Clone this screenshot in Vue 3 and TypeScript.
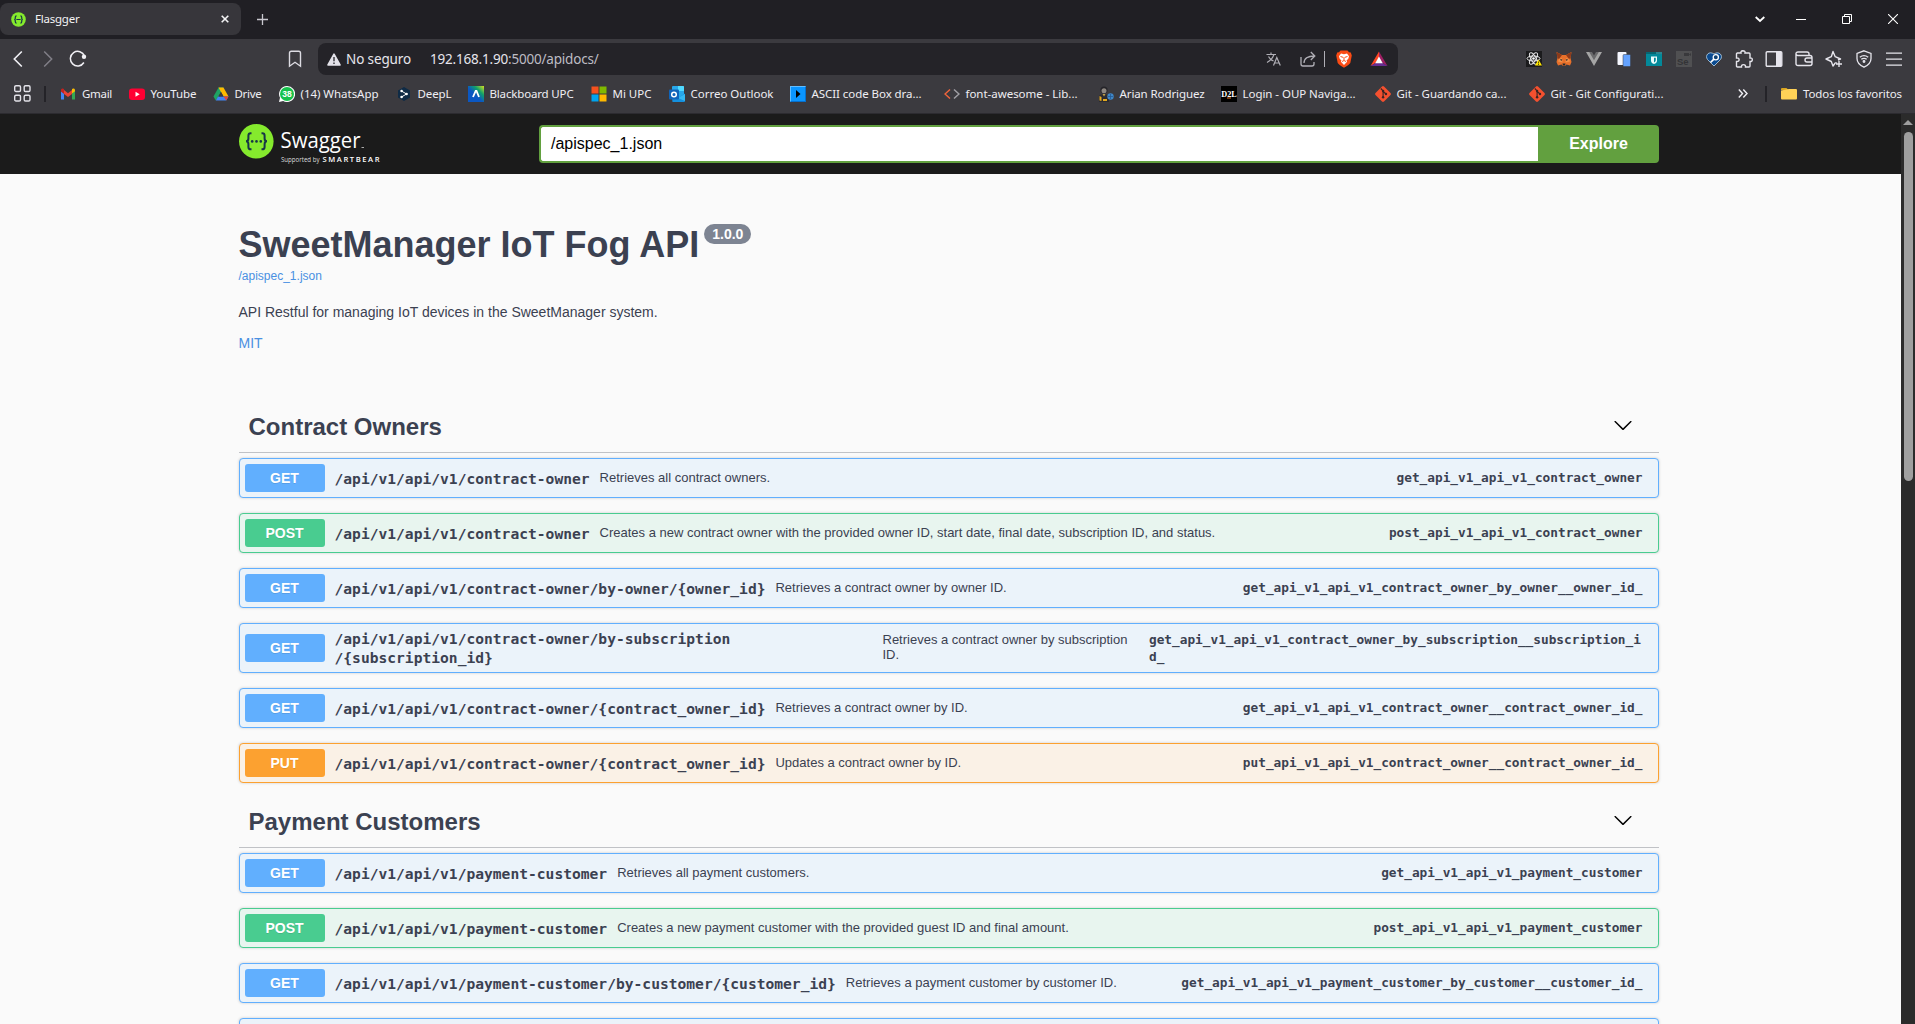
<script setup lang="ts">
type Method = 'get' | 'post' | 'put'

interface Operation {
  method: Method
  path: string[]
  summary: string
  id: string
  wrap?: boolean
}

interface Bookmark {
  icon: string
  label: string
  width: number
  text: number
}

interface Tag {
  name: string
  operations: Operation[]
}

const icons: Record<string, string> = {
  gmail:
    '<path d="M1 4v9.5h3V7.300z" fill="#4285f4"/><path d="M12 7.300v6.200h3V4z" fill="#34a853"/><path d="M1 3.500V5.500l3 2.300V4z" fill="#c5221f"/><path d="M4 4l4 3.300L12 4v4l-4 3-4-3z" fill="#ea4335"/><path d="M1 4.200C1 2.500 2.800 2 4 3v4.500L1 5.300z" fill="#c5221f"/><path d="M15 4.200C15 2.500 13.200 2 12 3v4.500l3-2.200z" fill="#fbbc04"/>',
  youtube: '<rect x="0" y="2.500" width="16" height="11.500" rx="3" fill="#ff0033"/><path d="M6.500 5.800v5l4.200-2.500z" fill="#fff"/>',
  drive:
    '<path d="M5.500 1.500h5L5.300 10.500 2.800 14.500 .5 10.500z" fill="#1ea362"/><path d="M5.500 1.500h5l5 9h-5z" fill="#ffba00"/><path d="M5 10.500h10.500l-2.300 4H2.800z" fill="#4285f4"/><path d="M8 6l2.500 4.500h-5z" fill="#3b3a3f"/><path d="M10.500 10.500h5l-2.300 4z" fill="#ea4335"/>',
  whatsapp:
    '<path d="M8 0a8 8 0 1 1-3.800 15L0 16l1-4.200A8 8 0 0 1 8 0z" fill="#fff"/><circle cx="8" cy="8" r="7" fill="#16c24c"/><text x="8" y="11" text-anchor="middle" font-family="Liberation Sans, sans-serif" font-weight="bold" font-size="8.500" fill="#fff">38</text>',
  deepl:
    '<path d="M8 1l6 3.500v7L8 15l-6-3.500v-7z" fill="#0f2b46"/><path d="M5.500 5l5 3-5 3" fill="none" stroke="#fff" stroke-width="1"/><circle cx="5.600" cy="5" r="1.300" fill="#fff"/><circle cx="10.600" cy="8" r="1.300" fill="#fff"/><circle cx="5.600" cy="11" r="1.300" fill="#fff"/>',
  blackboard:
    '<defs><linearGradient id="bb" x1="0" y1="1" x2="1" y2="0"><stop offset=".45" stop-color="#0b57c2"/><stop offset=".7" stop-color="#10a06a"/><stop offset="1" stop-color="#d8e021"/></linearGradient></defs><rect width="16" height="16" fill="url(#bb)"/><path d="M5 11l2.700-6h.8L11 11" fill="none" stroke="#fff" stroke-width="1.800"/>',
  microsoft:
    '<path d="M.5.5h7v7h-7z" fill="#f4511e"/><path d="M8.500.5h7v7h-7z" fill="#80b900"/><path d="M.5 8.500h7v7h-7z" fill="#00a4ef"/><path d="M8.500 8.500h7v7h-7z" fill="#ffb900"/>',
  outlook:
    '<rect x="3" y="0" width="12" height="11" rx="1" fill="#28a8ea"/><path d="M9 0h5q1 0 1 1v4H9z" fill="#50d9ff"/><path d="M2.500 8.500L9 12l7-4.500V15q0 1-1 1H3.500z" fill="#1490df"/><path d="M16 8v7l-7-3z" fill="#35b8f1"/><rect x="0" y="3.500" width="10" height="10" rx="1" fill="#0f64ba"/><circle cx="5" cy="8.500" r="2.300" fill="none" stroke="#fff" stroke-width="1.500"/>',
  ascii: '<rect width="16" height="16" fill="#0a95ff"/><path d="M0 0h16v1H1v15H0z" fill="#62bdff"/><path d="M16 0v16H0l1-1h14V1z" fill="#0570cf"/><path d="M6 4l4.500 4L6 12z" fill="#000"/>',
  code: '<path d="M6 3.500L1 8l5 4.500" fill="none" stroke="#f0643b" stroke-width="1.500"/><path d="M10 3.500L15 8l-5 4.500" fill="none" stroke="#a09fa5" stroke-width="1.500"/>',
  person:
    '<circle cx="6" cy="4" r="3.600" fill="#252429"/><circle cx="6" cy="4.700" r="2.500" fill="#8d8781"/><path d="M1 16V11q0-3 5-3 4 0 5 3v5z" fill="#2b2b30"/><path d="M1.500 10l2 1v4l-2-.500zM5 13h4v2H5z" fill="#e3a81f"/><path d="M4.500 8h3L6 10.500z" fill="#c3a14a"/><circle cx="12.500" cy="10.500" r="3.200" fill="#3e86c8"/><path d="M10 10.500h5M12.500 8v5" stroke="#245a93" stroke-width=".8"/>',
  d2l: '<rect width="16" height="16" fill="#000"/><text x="8" y="11" text-anchor="middle" font-family="Liberation Serif, serif" font-weight="bold" font-size="8.500" textLength="15.500" lengthAdjust="spacingAndGlyphs" fill="#fff">D2L</text><path d="M6 12h4" stroke="#e5701e"/>',
  git: '<path d="M7 .500Q8-.3 9 .500L15.500 7Q16.300 8 15.500 9L9 15.500Q8 16.300 7 15.500L.5 9Q-.3 8 .5 7z" fill="#f4502f"/><path d="M5.800 2.500l2.300 2.400V11.500M8.200 5.500L11 8" stroke="#3a2523" stroke-width="1.100" fill="none"/><circle cx="8.100" cy="5" r="1.200" fill="#3a2523"/><circle cx="8.100" cy="11.300" r="1.200" fill="#3a2523"/><circle cx="11" cy="8" r="1.200" fill="#3a2523"/>',
  folder: '<path d="M0 3q0-1 1-1h4.500l2 2H0z" fill="#d9a520"/><path d="M0 4.500L8 3h7q1 0 1 1v8.500q0 1-1 1H1q-1 0-1-1z" fill="#ffd257"/>',
  react:
    '<rect width="16" height="16" fill="#1b1b1d"/><g fill="none" stroke="#e9e9ea" stroke-width="1"><ellipse cx="7.500" cy="7.500" rx="6.500" ry="2.500"/><ellipse cx="7.500" cy="7.500" rx="6.500" ry="2.500" transform="rotate(60 7.500 7.500)"/><ellipse cx="7.500" cy="7.500" rx="6.500" ry="2.500" transform="rotate(120 7.500 7.500)"/></g><circle cx="7.500" cy="7.500" r="1.300" fill="#fff"/><path d="M12.500 8.500L16 14.500H9z" fill="#ffe600"/><path d="M12.500 10.500v2M12.500 13v1" stroke="#4a4300" stroke-width=".9"/>',
  fox: '<path d="M.5 1l5.500 3h4l5.500-3-1 6 1 4-1.500 3.500-3.500-1L9 15H7l-1.500-1.500-3.500 1L.5 11l1-4z" fill="#e8702a"/><path d="M.5 1L6 4 3 8 1.500 7zM15.500 1L10 4l3 4 1.500-1z" fill="#8b3a1b"/><path d="M3 8l3-1 .5 4.500L2 10.500zM13 8l-3-1-.5 4.500 4.500-1z" fill="#f2914a"/><path d="M4.500 8.500l1.500.8M11.500 8.500l-1.500.8" stroke="#23282c" stroke-width="1.200"/><path d="M6.500 12.500h3L9 14.500H7z" fill="#23282c"/>',
  vue: '<path d="M0 1h5l3 5 3-5h5L8 15z" fill="#a5a5a5"/><path d="M3.200 1H6l2 3.500L10 1h2.800L8 9.300z" fill="#6a6a6c"/>',
  pages: '<rect x="1.500" y="1" width="9" height="13" rx="1" fill="#f5f7ff"/><rect x="7" y="3.500" width="7.500" height="12" rx="1" fill="#64a2ff" stroke="#3b3a3f" stroke-width=".5"/>',
  teal: '<rect y="1" width="16" height="14" fill="#03899a"/><path d="M0 1h16v2H0z" fill="#056672"/><path d="M10.500 2h1M12.500 2h1M14.500 2h1" stroke="#9fe6ee"/><path d="M5 5.500h6v4q0 2.500-3 3.500-3-1-3-3.500z" fill="#eafcfd"/><path d="M8 6.800V11.500Q9.800 10.800 9.800 9V6.800z" fill="#03899a"/>',
  se: '<rect width="16" height="16" fill="#505052"/><text x="1" y="14" font-family="Liberation Sans, sans-serif" font-weight="bold" font-size="9.500" fill="#343437">Se</text><path d="M8 2h5v3H8zM13 3.500l2-1.500v3z" fill="#39393c"/>',
  heart: '<path d="M8 15L1.500 8.500C-1.500 4.500 3-.500 8 3c5-3.500 9.500 1.500 6.500 5.500z" fill="#0a4a90" stroke="#b8d4ea" stroke-width=".8"/><circle cx="9.800" cy="6.300" r="2.600" fill="#0f4172" stroke="#fff" stroke-width="1.300"/><path d="M7.900 8.200L4.500 11.500" stroke="#fff" stroke-width="1.700"/>',
}

const bookmarks: Bookmark[] = [
  { icon: 'gmail', label: 'Gmail', width: 68.5, text: 30 },
  { icon: 'youtube', label: 'YouTube', width: 84, text: 46 },
  { icon: 'drive', label: 'Drive', width: 66, text: 27 },
  { icon: 'whatsapp', label: '(14) WhatsApp', width: 117, text: 78 },
  { icon: 'deepl', label: 'DeepL', width: 72, text: 34 },
  { icon: 'blackboard', label: 'Blackboard UPC', width: 123, text: 84 },
  { icon: 'microsoft', label: 'Mi UPC', width: 78, text: 39 },
  { icon: 'outlook', label: 'Correo Outlook', width: 121, text: 83 },
  { icon: 'ascii', label: 'ASCII code Box dra...', width: 154, text: 110 },
  { icon: 'code', label: 'font-awesome - Lib...', width: 154, text: 112 },
  { icon: 'person', label: 'Arian Rodriguez', width: 123, text: 85 },
  { icon: 'd2l', label: 'Login - OUP Naviga...', width: 154, text: 113 },
  { icon: 'git', label: 'Git - Guardando ca...', width: 154, text: 110 },
  { icon: 'git', label: 'Git - Git Configurati...', width: 154, text: 113 },
]

const extensions = ['react', 'fox', 'vue', 'pages', 'teal', 'se', 'heart']

const base = '/api/v1/api/v1'
const tags: Tag[] = [
  {
    name: 'Contract Owners',
    operations: [
      { method: 'get', path: [base + '/contract-owner'], summary: 'Retrieves all contract owners.', id: 'get_api_v1_api_v1_contract_owner' },
      { method: 'post', path: [base + '/contract-owner'], summary: 'Creates a new contract owner with the provided owner ID, start date, final date, subscription ID, and status.', id: 'post_api_v1_api_v1_contract_owner' },
      { method: 'get', path: [base + '/contract-owner/by-owner/{owner_id}'], summary: 'Retrieves a contract owner by owner ID.', id: 'get_api_v1_api_v1_contract_owner_by_owner__owner_id_' },
      { method: 'get', path: [base + '/contract-owner/by-subscription', '/{subscription_id}'], summary: 'Retrieves a contract owner by subscription ID.', id: 'get_api_v1_api_v1_contract_owner_by_subscription__subscription_id_', wrap: true },
      { method: 'get', path: [base + '/contract-owner/{contract_owner_id}'], summary: 'Retrieves a contract owner by ID.', id: 'get_api_v1_api_v1_contract_owner__contract_owner_id_' },
      { method: 'put', path: [base + '/contract-owner/{contract_owner_id}'], summary: 'Updates a contract owner by ID.', id: 'put_api_v1_api_v1_contract_owner__contract_owner_id_' },
    ],
  },
  {
    name: 'Payment Customers',
    operations: [
      { method: 'get', path: [base + '/payment-customer'], summary: 'Retrieves all payment customers.', id: 'get_api_v1_api_v1_payment_customer' },
      { method: 'post', path: [base + '/payment-customer'], summary: 'Creates a new payment customer with the provided guest ID and final amount.', id: 'post_api_v1_api_v1_payment_customer' },
      { method: 'get', path: [base + '/payment-customer/by-customer/{customer_id}'], summary: 'Retrieves a payment customer by customer ID.', id: 'get_api_v1_api_v1_payment_customer_by_customer__customer_id_' },
    ],
  },
]

// Tracks a label out or in until it is as wide as the given number of pixels.
const vFit = {
  mounted(el: HTMLElement, binding: { value: number }) {
    const length = (el.textContent ?? '').length
    const natural = el.getBoundingClientRect().width
    el.style.letterSpacing = `${(binding.value - natural) / length}px`
  },
}
</script>

<template>
  <div class="window">
    <header class="tabstrip">
      <div class="tab">
        <svg class="favicon" width="15" height="15" viewBox="0 0 35 35">
          <circle cx="17.500" cy="17.500" r="17" fill="#85ea2d" />
          <path d="M13 9q-3 0-3 3v3q0 2.500-2.500 2.500Q10 17.500 10 20v3q0 3 3 3M22 9q3 0 3 3v3q0 2.500 2.500 2.500Q25 17.500 25 20v3q0 3-3 3M12.500 17.500h10" fill="none" stroke="#173647" stroke-width="2.800" />
        </svg>
        <span v-fit="44.5" class="tab-title">Flasgger</span>
        <svg class="tab-close" width="8" height="8" viewBox="0 0 8 8"><path d="M.7.7l6.600 6.600M7.300.7L.7 7.300" stroke="#f4f4f6" stroke-width="1.600" /></svg>
      </div>
      <svg class="new-tab" width="11" height="11" viewBox="0 0 11 11"><path d="M5.500 0v11M0 5.500h11" stroke="#c9c8cf" stroke-width="1.300" /></svg>
      <div class="controls">
        <svg width="10" height="10" viewBox="0 0 10 10"><path d="M.7 3l4.300 4 4.300-4" fill="none" stroke="#fff" stroke-width="1.800" /></svg>
        <svg width="10" height="10" viewBox="0 0 10 10"><path d="M0 5.500h10" stroke="#fff" /></svg>
        <svg width="10" height="10" viewBox="0 0 10 10"><path d="M.5 2.500h7v7h-7zM2.500 2.500v-2h7v7h-2" fill="none" stroke="#fff" /></svg>
        <svg width="10" height="10" viewBox="0 0 10 10"><path d="M0 0l10 10M10 0L0 10" stroke="#fff" stroke-width="1.100" /></svg>
      </div>
    </header>

    <div class="toolbar">
      <div class="nav">
        <svg width="10" height="18" viewBox="0 0 10 18"><path d="M8.800 1.500L1.300 9l7.500 7.500" fill="none" stroke="#f1f0f5" stroke-width="1.600" /></svg>
        <svg width="10" height="18" viewBox="0 0 10 18"><path d="M1.200 1.500L8.700 9l-7.500 7.500" fill="none" stroke="#817f87" stroke-width="1.500" /></svg>
        <svg width="18" height="18" viewBox="0 0 18 18"><path d="M14.900 12.500A7.300 7.300 0 1 1 15.500 6" fill="none" stroke="#f1f0f5" stroke-width="1.500" /><circle cx="15" cy="6.800" r="2.200" fill="#f1f0f5" /></svg>
      </div>
      <svg class="mark" width="14" height="18" viewBox="0 0 14 18"><path d="M1.500 3Q1.500 1.200 3.300 1.200h7.400q1.800 0 1.800 1.800v13.200L7 12.300l-5.500 3.900z" fill="none" stroke="#dddce3" stroke-width="1.400" /></svg>
      <div class="address">
        <svg class="warn" width="14" height="13" viewBox="0 0 14 13"><path d="M7 1.200L13 12H1z" fill="#e3e2e9" stroke="#e3e2e9" stroke-width="1.600" stroke-linejoin="round" /><path d="M7 4v4.300M7 9.500v1.500" stroke="#242328" stroke-width="1.300" /></svg>
        <span v-fit="65" class="insecure">No seguro</span>
        <span v-fit="168.5" class="url">192.168.1.90<i>:5000/apidocs/</i></span>
        <div class="address-tools">
          <svg width="16" height="16" viewBox="0 0 16 16" fill="none" stroke="#b0afb6" stroke-width="1.200"><path d="M.5 3.500h9.500M5 1.500v2M8 3.500Q6.500 8.500 1 11.500M2.500 5.500Q4 8.500 7.500 10" /><path d="M7.500 14.500l3.300-8 3.500 8M8.700 12h4.500" /></svg>
          <svg width="16" height="16" viewBox="0 0 16 16" fill="none" stroke="#b0afb6" stroke-width="1.300"><path d="M1 6v7q0 2 2 2h9q2 0 2-2v-2" /><path d="M4 12Q4 5 14.500 5M10.800 1l4 4-4 4" /></svg>
          <i class="divider" />
          <svg width="16" height="18" viewBox="0 0 16 18"><path d="M4.500.5h7l1.500 1.700 1.800.2 1 3-1.500 7.600Q13.500 14.500 8 17.700 2.500 14.500 1.700 13L.2 5.400l1-3 1.800-.2z" fill="#fb4b14" /><path d="M5 3.500l3 .7 3-.7 2 2.800-.7 2.500-1.800 1.700.6 1.300L8 15l-3.100-3.200.6-1.300L3.700 8.800 3 6.300z" fill="#fff" /><path d="M4.500 6.500l2.500.8M11.500 6.500L9 7.300M8 7v3M6 11.500l2-1 2 1" stroke="#fb4b14" stroke-width="1" fill="none" /></svg>
          <svg width="18" height="16" viewBox="0 0 18 16"><path d="M9 .5v6L5.500 12 .5 15z" fill="#ff4724" /><path d="M9 .5L17.500 15l-5-3L9 6.500z" fill="#9e1f63" /><path d="M.5 15h17l-5-3h-7z" fill="#662d91" /><path d="M9 5.500l3.800 6.700H5.200z" fill="#fff" /></svg>
        </div>
      </div>
      <div class="extensions">
        <svg v-for="name in extensions" :key="name" width="16" height="16" viewBox="0 0 16 16" v-html="icons[name]" />
        <svg width="18" height="18" viewBox="0 0 18 18" fill="none" stroke="#e6e5ec" stroke-width="1.400"><path d="M2 3h4q-.5-2 1.700-2.200Q10.500.8 10 3h4q1 0 1 1v4q2.300-.3 2.300 1.700T15 11.500V16q0 1-1 1h-3.500q.3-2.400-2-2.400T6.500 17H2.500q-1 0-1-1v-4.500q2.600.2 2.600-1.800T1.500 8V4Q1.500 3 2.500 3z" /></svg>
        <svg width="18" height="18" viewBox="0 0 18 18"><rect x="1.200" y="1.700" width="15.600" height="14.600" rx="1" fill="none" stroke="#e6e5ec" stroke-width="1.400" /><path d="M11 2h5.500v14H11z" fill="#e6e5ec" /></svg>
        <svg width="18" height="18" viewBox="0 0 18 18" fill="none" stroke="#e6e5ec" stroke-width="1.400"><path d="M14 5V4q0-2-2-2H3Q1 2 1 3.700T3 5.500h12q2 0 2 2v6q0 2-2 2H3q-2 0-2-2V3.500M17 8h-5q-2 0-2 2t2 2h5" /></svg>
        <svg width="18" height="18" viewBox="0 0 18 18" fill="none" stroke="#e6e5ec" stroke-width="1.400"><path d="M12 13.200q-1.800-1-2.500.8L8 16 6.300 11.500 1 9l5.300-2.300L8 1.500l2.200 5.200L15.500 9l-2.500 1M14 11v6M11 14h6" stroke-linejoin="round" /></svg>
        <svg width="18" height="18" viewBox="0 0 18 18" fill="none" stroke="#e6e5ec" stroke-width="1.300"><path d="M9 .8l7 2.700v5q0 5.500-7 8.700-7-3.200-7-8.700v-5z" /><path d="M4.800 7.200Q9 4 13.200 7.200M6.300 9.300q2.700-2 5.400 0" /><circle cx="9" cy="11.500" r=".8" fill="#e6e5ec" /></svg>
        <svg width="18" height="18" viewBox="0 0 18 18"><path d="M1 3.200h16M1 9.200h16M1 15.200h16" stroke="#e6e5ec" stroke-width="1.300" /></svg>
      </div>
    </div>

    <div class="bookmarks">
      <svg class="apps" width="17" height="17" viewBox="0 0 17 17" fill="none" stroke="#e3e2e9" stroke-width="1.400"><rect x=".7" y=".7" width="5.800" height="5.800" rx="1.300" /><rect x="10.200" y=".7" width="5.800" height="5.800" rx="1.300" /><rect x=".7" y="10.200" width="5.800" height="5.800" rx="1.300" /><rect x="10.200" y="10.200" width="5.800" height="5.800" rx="1.300" /></svg>
      <i class="bar" />
      <div v-for="b in bookmarks" :key="b.label" class="bookmark" :style="{ width: b.width + 'px' }">
        <svg width="16" height="16" viewBox="0 0 16 16" v-html="icons[b.icon]" />
        <span v-fit="b.text">{{ b.label }}</span>
      </div>
      <div class="bookmarks-end">
        <svg width="10" height="9" viewBox="0 0 10 9"><path d="M.8.6l3.700 3.900L.8 8.400M5.300.6L9 4.500 5.300 8.400" fill="none" stroke="#f1f0f5" stroke-width="1.400" /></svg>
        <i class="bar" />
        <div class="bookmark">
          <svg width="16" height="16" viewBox="0 0 16 16" v-html="icons.folder" />
          <span v-fit="99">Todos los favoritos</span>
        </div>
      </div>
    </div>

    <div class="viewport">
      <main class="page">
        <div class="topbar">
          <svg class="logo" width="145" height="42" viewBox="0 0 145 42">
            <circle cx="17.300" cy="17.300" r="17.300" fill="#85ea2d" />
            <path d="M12.500 9.300h-.8q-2.300 0-2.300 2.400v2.800q0 2.800-2.400 2.800 2.400 0 2.400 2.800v2.800q0 2.400 2.300 2.400h.8M22.500 9.300h.8q2.300 0 2.300 2.400v2.800q0 2.800 2.400 2.800-2.400 0-2.400 2.800v2.800q0 2.400-2.300 2.400h-.8" fill="none" stroke="#173647" stroke-width="2" />
            <g fill="#173647"><circle cx="13.200" cy="17.400" r="1.300" /><circle cx="17.500" cy="17.400" r="1.300" /><circle cx="21.800" cy="17.400" r="1.300" /></g>
            <text x="41.500" y="24" font-family="Open Sans, sans-serif" font-size="22.500" textLength="80" lengthAdjust="spacingAndGlyphs" fill="#fff">Swagger</text>
            <path d="M122.500 23.500h2.500" stroke="#aaa" />
            <text x="42" y="38" font-family="Open Sans, sans-serif" font-size="6.500" textLength="38.500" lengthAdjust="spacingAndGlyphs" fill="#ddd">Supported by</text>
            <text x="83.500" y="38" font-family="Open Sans, sans-serif" font-weight="600" font-size="7.600" textLength="57" fill="#fff">SMARTBEAR</text>
          </svg>
          <div class="spec">
            <div class="spec-input">/apispec_1.json</div>
            <div class="spec-button">Explore</div>
          </div>
        </div>

        <section class="info">
          <h2>SweetManager IoT Fog API<span class="version">1.0.0</span></h2>
          <a class="spec-link">/apispec_1.json</a>
          <p>API Restful for managing IoT devices in the SweetManager system.</p>
          <a class="license">MIT</a>
        </section>

        <section v-for="tag in tags" :key="tag.name" class="tag">
          <h3>
            <span>{{ tag.name }}</span>
            <svg width="20" height="20" viewBox="0 0 20 20"><path d="M17.418 6.109c.272-.268.709-.268.979 0s.271.701 0 .969l-7.908 7.830c-.27.268-.707.268-.979 0l-7.908-7.830c-.27-.268-.27-.701 0-.969.271-.268.709-.268.979 0L10 13.250l7.418-7.141z" /></svg>
          </h3>
          <div v-for="op in tag.operations" :key="op.id" class="op" :class="[op.method, { wrap: op.wrap }]">
            <span class="method">{{ op.method.toUpperCase() }}</span>
            <span class="path"><template v-for="part in op.path" :key="part">{{ part }}<wbr /></template></span>
            <span class="summary">{{ op.summary }}</span>
            <span class="op-id">{{ op.id }}</span>
          </div>
        </section>
        <div class="tag">
          <div class="op get" />
        </div>
      </main>
      <aside class="scrollbar">
        <i class="arrow" />
        <i class="thumb" />
      </aside>
    </div>
  </div>
</template>

<style>
html,
body {
  margin: 0;
  overflow: hidden;
}
</style>

<style scoped>
.window {
  width: 1915px;
  height: 1024px;
  overflow: hidden;
  display: flex;
  flex-direction: column;
  font-family: 'Noto Sans', 'Open Sans', sans-serif;
  background: #fafafa;
}
svg {
  display: block;
  flex: none;
}
.tabstrip {
  flex: none;
  height: 39px;
  box-sizing: border-box;
  padding-bottom: 1px;
  display: flex;
  align-items: center;
  background: #201f24;
}
.tab {
  display: flex;
  align-items: center;
  width: 241px;
  height: 32px;
  box-sizing: border-box;
  padding: 0 12px 0 11px;
  border-radius: 8px;
  background: #37363b;
  font-size: 11.5px;
  color: #f3f3f5;
}
.tab-title {
  margin-left: 9px;
  padding-bottom: 1px;
  white-space: nowrap;
}
.tab-close {
  margin-left: auto;
}
.new-tab {
  margin-left: 15.5px;
}
.controls {
  display: flex;
  gap: 36px;
  margin-left: auto;
  padding-right: 17px;
}
.controls svg:first-child {
  margin-right: -5px;
}
.toolbar {
  flex: none;
  height: 40px;
  display: flex;
  align-items: center;
  background: #3b3a3f;
}
.nav {
  display: flex;
  align-items: center;
  gap: 16px;
  padding-left: 13px;
}
.nav svg:nth-child(2) {
  margin-left: 4px;
}
.mark {
  margin-left: 201px;
}
.address {
  display: flex;
  align-items: center;
  width: 1080px;
  height: 32px;
  margin-left: 16px;
  box-sizing: border-box;
  padding: 0 10px 0 9px;
  border-radius: 8px;
  background: #242328;
  color: #e6e5ec;
  font-size: 13.5px;
  white-space: nowrap;
}
.insecure {
  margin-left: 5px;
}
.url {
  margin-left: 19px;
}
.url i {
  font-style: normal;
  color: #bdbcc4;
}
.address-tools {
  display: flex;
  align-items: center;
  margin-left: auto;
}
.address-tools svg:nth-child(2) {
  margin-left: 18px;
}
.divider {
  width: 1px;
  height: 16px;
  margin: 0 11px 0 8px;
  background: #b0afb6;
}
.address-tools svg:last-child {
  margin-left: 18px;
}
.extensions {
  display: flex;
  align-items: center;
  margin-left: 121px;
}
.extensions svg {
  margin: 0 7px;
}
.extensions svg:nth-child(n + 8) {
  margin: 0 6px;
}
.bookmarks {
  flex: none;
  height: 35px;
  padding-bottom: 5px;
  display: flex;
  align-items: center;
  box-sizing: border-box;
  background: #3b3a3f;
  border-bottom: 1px solid #2c2b30;
  color: #efeef3;
  font-size: 11.5px;
  white-space: nowrap;
}
.bookmarks > .apps {
  margin-left: 13.5px;
}
.bar {
  width: 2px;
  height: 16px;
  margin: 0 14px 0 13.5px;
  background: #242328;
}
.bookmark {
  flex: none;
  display: flex;
  align-items: center;
  gap: 6px;
}
.bookmarks-end {
  display: flex;
  align-items: center;
  margin-left: auto;
  padding-right: 13px;
}
.bookmarks-end .bar {
  margin: 0 14px 0 17px;
}
.viewport {
  flex: 1;
  min-height: 0;
  display: flex;
  font-family: 'Liberation Sans', Arial, sans-serif;
  color: #3b4151;
}
.page {
  flex: 1;
  overflow: hidden;
}
.topbar {
  height: 60px;
  box-sizing: border-box;
  display: flex;
  padding: 10px 242px 0 239px;
  background: #1b1b1b;
}
.spec {
  flex: 1;
  display: flex;
  height: 38px;
  margin: 1px 0 0 155px;
}
.spec-input {
  flex: 1;
  box-sizing: border-box;
  padding-left: 10px;
  border: 2px solid #62a03f;
  border-right: 0;
  border-radius: 4px 0 0 4px;
  background: #fff;
  color: #000;
  font-size: 16px;
  line-height: 33px;
}
.spec-button {
  width: 121px;
  border-radius: 0 4px 4px 0;
  background: #62a03f;
  color: #fff;
  font-size: 16px;
  font-weight: bold;
  line-height: 37px;
  text-align: center;
}
.info {
  display: flex;
  flex-direction: column;
  height: 229px;
  box-sizing: border-box;
  padding: 50px 0 0 238.5px;
}
.info h2 {
  display: flex;
  align-items: flex-start;
  margin: 0;
  font-size: 36px;
  line-height: 41px;
}
.version {
  margin: 0 0 0 5px;
  padding: 0 8px;
  border-radius: 20px;
  background: #7d8492;
  color: #fff;
  font-size: 14px;
  line-height: 20px;
}
.info a {
  color: #4990e2;
}
.spec-link {
  margin-top: 4px;
  font-size: 12px;
  line-height: 14px;
}
.info p {
  margin: 21px 0 15px;
  font-size: 14px;
  line-height: 16px;
}
.license {
  font-size: 14px;
  line-height: 16px;
}
.tag {
  margin: 0 242.5px 0 238.5px;
}
.tag h3 {
  display: flex;
  align-items: center;
  justify-content: space-between;
  height: 50px;
  box-sizing: border-box;
  margin: 0 0 5px;
  padding: 0 26px 5px 10px;
  border-bottom: 1px solid rgba(59, 65, 81, 0.3);
  font-size: 24px;
}
.tag h3 span {
  padding-top: 3px;
}
.op {
  display: flex;
  align-items: center;
  box-sizing: border-box;
  min-height: 40px;
  margin-bottom: 15px;
  padding: 5px;
  border: 1px solid;
  border-radius: 4px;
  box-shadow: 0 0 3px rgba(0, 0, 0, 0.19);
}
.get {
  border-color: #61affe;
  background: #ebf3fa;
}
.post {
  border-color: #49cc90;
  background: #e8f5ef;
}
.put {
  border-color: #fca130;
  background: #faf1e6;
}
.get .method {
  background: #61affe;
}
.post .method {
  background: #49cc90;
}
.put .method {
  background: #fca130;
}
.method {
  flex: none;
  width: 80px;
  border-radius: 3px;
  color: #fff;
  font-size: 14px;
  font-weight: bold;
  line-height: 28px;
  text-align: center;
  text-shadow: 0 1px 0 rgba(0, 0, 0, 0.1);
}
.path {
  flex: none;
  padding: 0 10px;
  font-family: 'DejaVu Sans Mono', 'Liberation Mono', monospace;
  font-size: 14.61px;
  font-weight: bold;
  line-height: 19px;
}
.summary {
  flex: 1;
  padding-bottom: 2px;
  font-size: 13px;
  line-height: 15px;
}
.op-id {
  flex: none;
  padding: 0 10px 1px;
  font-family: 'DejaVu Sans Mono', 'Liberation Mono', monospace;
  font-size: 12.786px;
  font-weight: bold;
  line-height: 17px;
}
.wrap .path {
  box-sizing: border-box;
  width: 558px;
}
.wrap .op-id {
  width: 493.5px;
  word-break: break-all;
}
.scrollbar {
  display: flex;
  flex-direction: column;
  align-items: center;
  width: 14px;
  background: #2b2b2b;
}
.arrow {
  margin-top: 6px;
  border: 5px solid transparent;
  border-top: 0;
  border-bottom: 5px solid #9f9f9f;
}
.thumb {
  width: 9px;
  height: 349px;
  margin-top: 7px;
  border-radius: 5px;
  background: #9f9f9f;
}
</style>
